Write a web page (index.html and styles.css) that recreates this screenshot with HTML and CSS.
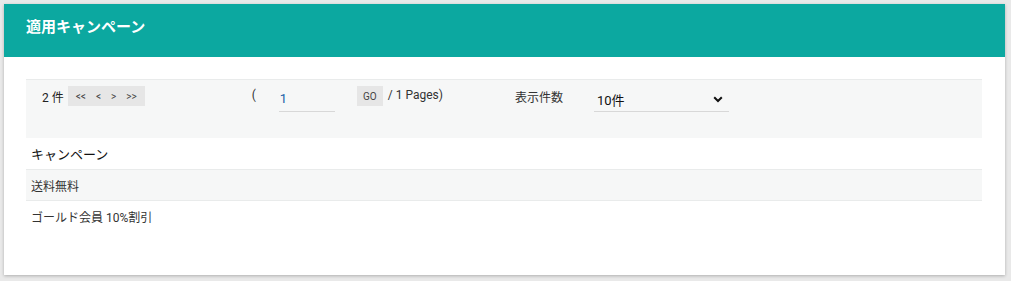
FILE: index.html
```html
<!DOCTYPE html>
<html lang="ja">
<head>
    <meta charset="UTF-8">
    <title>適用キャンペーン</title>
    <link rel="stylesheet" href="styles.css">
</head>
<body>
    <div class="card">
        <div class="card-header">適用キャンペーン</div>
        <div class="card-body">
            <div class="pager">
                <span class="count">2 件</span>
                <div class="nav">
                    <button type="button">&lt;&lt;</button>
                    <button type="button">&lt;</button>
                    <button type="button">&gt;</button>
                    <button type="button">&gt;&gt;</button>
                </div>
                <span class="paren">(</span>
                <input type="text" class="page-input" value="1">
                <button type="button" class="go">GO</button>
                <span class="pages">/ 1 Pages)</span>
                <span class="per-label">表示件数</span>
                <div class="select">
                    <span>10件</span>
                    <svg width="10" height="7" viewBox="0 0 10 7"><path d="M1.2 1.2 L5 5 L8.8 1.2" fill="none" stroke="#111" stroke-width="2"/></svg>
                </div>
            </div>
            <table class="list">
                <tr><th>キャンペーン</th></tr>
                <tr class="odd"><td>送料無料</td></tr>
                <tr><td>ゴールド会員 10%割引</td></tr>
            </table>
        </div>
    </div>
</body>
</html>
```

FILE: styles.css
```css
body {
    margin: 0;
    padding: 4px 6px 5px 4px;
    background-color: #e9e9e9;
    font-family: Roboto, "Noto Sans CJK JP", sans-serif;
    color: #222;
}
.card {
    background-color: white;
    box-shadow: 0 1px 3px rgba(0, 0, 0, 0.25);
}
.card-header {
    background-color: #0ca8a0;
    color: white;
    font-size: 15px;
    font-weight: bold;
    height: 53px;
    line-height: 46px;
    padding-left: 22px;
}
.card-body {
    padding: 22px 23px 44px 22px;
}
.pager {
    display: flex;
    align-items: flex-start;
    height: 58px;
    border-top: 1px solid #e9ebeb;
    background-color: #f6f7f7;
    font-size: 12px;
    padding-left: 16px;
}
.count {
    margin-top: 8px;
}
.nav {
    display: flex;
    margin-top: 6px;
    margin-left: 4px;
    background-color: #e6e6e6;
    height: 20px;
    padding: 0 3px;
}
.nav button {
    border: none;
    background: none;
    font-size: 10px;
    color: #444;
    padding: 0 5px;
    font-family: Roboto, sans-serif;
}
.paren {
    margin-left: 107px;
    margin-top: 8px;
    color: #333;
}
.page-input {
    width: 55px;
    margin-left: 23px;
    margin-top: 7px;
    border: none;
    border-bottom: 1px solid #d8d8d8;
    background: none;
    font-size: 13px;
    color: #1b5fa8;
    padding: 3px 0 5px 1px;
    font-family: Roboto, sans-serif;
    box-sizing: content-box;
    height: 16px;
}
.go {
    margin-left: 22px;
    margin-top: 6px;
    height: 20px;
    width: 26px;
    padding: 0;
    border: none;
    background-color: #e6e6e6;
    font-size: 10px;
    color: #444;
    font-family: Roboto, sans-serif;
}
.pages {
    margin-left: 5px;
    margin-top: 8px;
    color: #333;
}
.per-label {
    margin-left: 72px;
    margin-top: 8px;
    color: #333;
}
.select {
    display: flex;
    align-items: center;
    justify-content: space-between;
    width: 126px;
    height: 24px;
    margin-left: 31px;
    margin-top: 7px;
    padding: 0 6px 0 3px;
    border-bottom: 1px solid #d8d8d8;
    font-size: 13px;
    color: #111;
}
.list {
    width: 100%;
    border-collapse: collapse;
    font-size: 12px;
}
.list th {
    text-align: left;
    font-weight: normal;
    font-size: 13px;
    color: #111;
    height: 31px;
    padding: 0 5px;
    border-bottom: 1px solid #e9ebeb;
}
.list td {
    height: 30px;
    padding: 0 5px;
    color: #333;
}
.list tr.odd td {
    background-color: #f6f7f7;
    border-bottom: 1px solid #e9ebeb;
}
```
